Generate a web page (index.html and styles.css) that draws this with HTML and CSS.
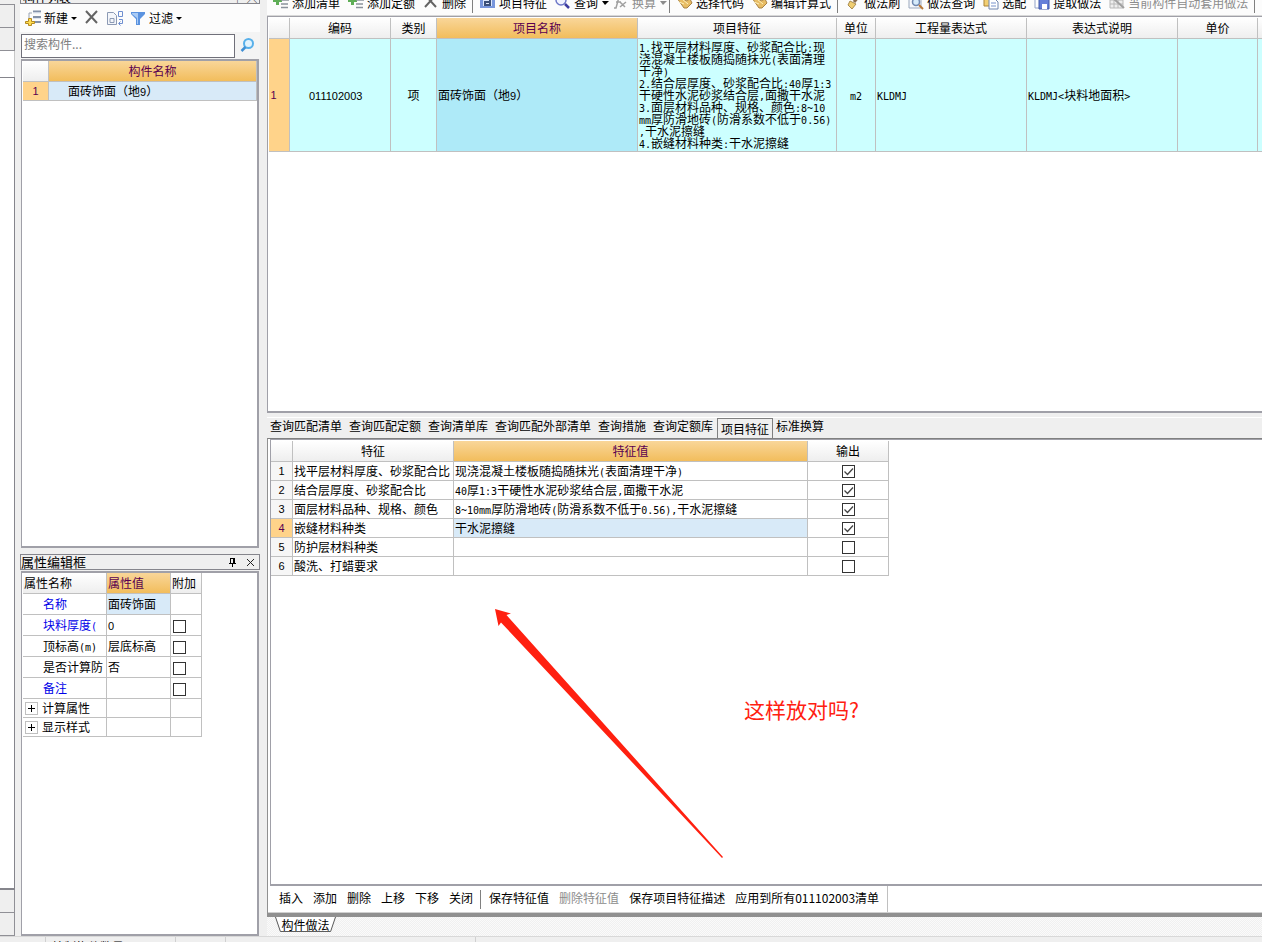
FILE: index.html
```html
<!DOCTYPE html>
<html lang="zh-CN">
<head>
<meta charset="utf-8">
<title>构件做法</title>
<link rel="stylesheet" href="styles.css">
</head>
<body>
<div class="workspace">
  <div class="edge-strip">
    <div class="edge-cap"></div>
    <div class="edge-cell"></div>
    <div class="edge-cell"></div>
    <div class="edge-gap"></div>
    <div class="edge-list"></div>
    <div class="edge-cell"></div>
    <div class="edge-cell"></div>
  </div>

  <aside class="sidebar">
    <div class="dock-title dock-title-clipped"><span>构件列表</span><span class="clipped-marks">┬ &nbsp;╳</span></div>
    <div class="side-tools">
      <button class="tool">
        <svg class="icon" viewBox="0 0 16 16"><path d="M8 1.500h8M8 7h8M8 12h8" stroke="#8492aa" stroke-width="2" fill="none"/><path d="M8 3h8M8 8.500h8" stroke="#dfe5ef" fill="none"/><path d="M4 8V3h3" stroke="#9aa4b4" fill="none"/><path d="M3.500 8.500h3v3h3v2h-3v2h-3v-2h-3v-2h3z" fill="#ffdc50" stroke="#b48a20"/></svg>
        <span>新建</span><i class="caret"></i>
      </button>
      <button class="tool tool-x" aria-label="删除">
        <svg class="icon" viewBox="0 0 16 16"><path d="M2 1l11 12M13 1L2 13" stroke="#646464" stroke-width="2" fill="none"/></svg>
      </button>
      <button class="tool tool-copy" aria-label="复制">
        <svg class="icon" viewBox="0 0 16 16"><path d="M.5 2.500h6l3 3v9h-9z" fill="#f4f6fa" stroke="#8c9ab4"/><path d="M3 8.500h4v4H3z" fill="none" stroke="#8c9ab4"/><path d="M11.500 1.500h4v5h-4zM12 9.500h3.500v4H12M13.500 11.500l-2 2 2 2" fill="none" stroke="#6f8fd0"/></svg>
      </button>
      <button class="tool">
        <svg class="icon" viewBox="0 0 16 16"><path d="M1 2h14v2l-5 5v6H6V9L1 4z" fill="#5b93e0"/><path d="M2 3h6v11H7V8L2 4z" fill="#a9cbf5"/></svg>
        <span>过滤</span><i class="caret"></i>
      </button>
    </div>
    <div class="search-row">
      <input class="search-input" type="text" placeholder="搜索构件..." aria-label="搜索构件">
      <button class="search-button" aria-label="搜索">
        <svg class="icon" viewBox="0 0 16 16"><circle cx="8.500" cy="5.500" r="4.500" fill="#e2f3fd" stroke="#58b0ea" stroke-width="2"/><path d="M5.500 9L1.500 13" stroke="#3f8fd4" stroke-width="2.500"/></svg>
      </button>
    </div>
    <div class="side-box side-list">
      <table class="grid list-grid">
        <colgroup><col class="w26"><col></colgroup>
        <thead><tr><th></th><th class="hot">构件名称</th></tr></thead>
        <tbody><tr><td class="rownum current">1</td><td class="selected indent">面砖饰面（地<span class="num">9</span>）</td></tr></tbody>
      </table>
    </div>
    <div class="dock-title dock-title-props">
      <span>属性编辑框</span>
      <span class="dock-buttons">
        <button aria-label="固定"><svg viewBox="0 0 9 9"><path d="M2 .5h5M2.500 0v5M5.500 0v5M6.500 0v5M1 5.500h7M4.500 5v4" stroke="#000" fill="none"/></svg></button>
        <button aria-label="关闭"><svg viewBox="0 0 9 9"><path d="M1 1l7 7M8 1L1 8" stroke="#222" fill="none"/></svg></button>
      </span>
    </div>
    <div class="side-box side-props">
      <table class="grid prop-grid">
        <colgroup><col class="w84"><col class="w64"><col class="w31"></colgroup>
        <thead><tr><th>属性名称</th><th class="hot">属性值</th><th>附加</th></tr></thead>
        <tbody>
          <tr><td class="prop link">名称</td><td class="selected">面砖饰面</td><td></td></tr>
          <tr><td class="prop link">块料厚度<span class="mono">(</span></td><td><span class="num">0</span></td><td><input type="checkbox" aria-label="块料厚度 附加"></td></tr>
          <tr><td class="prop">顶标高<span class="mono">(m)</span></td><td>层底标高</td><td><input type="checkbox" aria-label="顶标高 附加"></td></tr>
          <tr><td class="prop">是否计算防</td><td>否</td><td><input type="checkbox" aria-label="是否计算防 附加"></td></tr>
          <tr><td class="prop link">备注</td><td></td><td><input type="checkbox" aria-label="备注 附加"></td></tr>
          <tr class="group"><td><div class="group-label"><button class="expander" aria-label="展开计算属性"></button><span>计算属性</span></div></td><td></td><td></td></tr>
          <tr class="group"><td><div class="group-label"><button class="expander" aria-label="展开显示样式"></button><span>显示样式</span></div></td><td></td><td></td></tr>
        </tbody>
      </table>
    </div>
  </aside>

  <main class="main">
    <div class="main-tools">
      <div class="main-tools-row">
        <button class="tool"><svg class="icon" viewBox="0 0 16 16"><path d="M3 1h3v3h3v3H6v3H3V7H0V4h3z" fill="#5fae57"/><path d="M8 5h8M8 9h7M8 12.500h7" stroke="#8b929c" stroke-width="1.500"/></svg><span>添加清单</span></button>
        <button class="tool"><svg class="icon" viewBox="0 0 16 16"><path d="M3 1h3v3h3v3H6v3H3V7H0V4h3z" fill="#5fae57"/><path d="M8 5h8M8 9h7M8 12.500h7" stroke="#8b929c" stroke-width="1.500"/></svg><span>添加定额</span></button>
        <button class="tool"><svg class="icon" viewBox="0 0 16 16"><path d="M2 0l11 12M13 0L2 12" stroke="#646464" stroke-width="2" fill="none"/></svg><span>删除</span></button>
        <i class="divider"></i>
        <button class="tool"><svg class="icon" viewBox="0 0 16 16"><path d="M0 0h15v13H0z" fill="#7896dc"/><path d="M3 2h9v9H3z" fill="#dce6fa"/><path d="M10 3v7H5V7h4" fill="none" stroke="#3c5078" stroke-width="2"/></svg><span>项目特征</span></button>
        <button class="tool menu"><svg class="icon" viewBox="0 0 16 16"><circle cx="6" cy="5" r="5" fill="#f2f4ff" stroke="#6e78c8" stroke-width="1.500"/><path d="M10 9l4 4" stroke="#3c3ca0" stroke-width="2.500"/></svg><span>查询</span><i class="caret"></i></button>
        <button class="tool menu off"><svg class="icon" viewBox="0 0 16 16"><path d="M8 2H6L3 13H1M3 7h5M7 7l5 5M13 7l-6 5" stroke="#a0a0a0" stroke-width="1.500" fill="none"/></svg><span>换算</span><i class="caret"></i></button>
        <i class="divider"></i>
        <button class="tool"><svg class="icon" viewBox="0 0 16 16"><path d="M0 3l4-1 5 4 4-2 2 4-5 5H7z" fill="#e8bd65" stroke="#a98243"/><path d="M2 7l5 2M5 4l6 5" stroke="#fff1bd"/></svg><span>选择代码</span></button>
        <button class="tool"><svg class="icon" viewBox="0 0 16 16"><path d="M0 3l4-1 5 4 4-2 2 4-5 5H7z" fill="#e8bd65" stroke="#a98243"/><path d="M2 7l5 2M5 4l6 5" stroke="#fff1bd"/></svg><span>编辑计算式</span></button>
        <i class="divider"></i>
        <button class="tool"><svg class="icon" viewBox="0 0 16 16"><path d="M14 1L9 7" stroke="#8a6c50" stroke-width="3"/><path d="M5 6l6 3-4 5-4-4z" fill="#f0ce72" stroke="#aa8c50"/></svg><span>做法刷</span></button>
        <button class="tool"><svg class="icon" viewBox="0 0 16 16"><path d="M1 0h12v13H1z" fill="#f6f8fc" stroke="#9ba8bd"/><circle cx="8" cy="7" r="3.500" fill="#d5eafa" stroke="#7088b0" stroke-width="1.500"/><path d="M11 10l4 4" stroke="#b87838" stroke-width="2"/></svg><span>做法查询</span></button>
        <button class="tool"><svg class="icon" viewBox="0 0 16 16"><path d="M1 0h11v11H1z" fill="#f2cf73" stroke="#ad8437"/><path d="M6 4h6l3 3v7H6z" fill="#fff" stroke="#7086b0"/><path d="M8 8h5M8 11h5" stroke="#7893cc"/></svg><span>选配</span></button>
        <button class="tool"><svg class="icon" viewBox="0 0 16 16"><path d="M1 0h8v13H1z" fill="#fff" stroke="#93a3c8"/><path d="M5 3h10v11H5z" fill="#6680d8" stroke="#4058a8"/><path d="M8 9h5v5H8z" fill="#fff"/></svg><span>提取做法</span></button>
        <button class="tool off"><svg class="icon" viewBox="0 0 16 16"><path d="M1 1h13v12H1zM1 5h13M1 9h13M5 1v12M9 1v12" fill="#eee" stroke="#b8b8b8"/><path d="M5 4l10 9" stroke="#a0a0a0" stroke-width="2"/></svg><span>当前构件自动套用做法</span></button>
        <i class="divider"></i>
      </div>
    </div>

    <div class="item-pane">
      <table class="grid item-grid">
        <colgroup><col class="w21"><col class="w101"><col class="w46"><col class="w201"><col class="w199"><col class="w39"><col class="w151"><col class="w151"><col class="w80"><col class="w80"></colgroup>
        <thead><tr><th></th><th>编码</th><th>类别</th><th class="hot">项目名称</th><th>项目特征</th><th>单位</th><th>工程量表达式</th><th>表达式说明</th><th>单价</th><th></th></tr></thead>
        <tbody><tr>
          <td class="rownum current">1</td>
          <td class="code"><span class="num">011102003</span></td>
          <td class="center">项</td>
          <td class="picked">面砖饰面（地<span class="num">9</span>）</td>
          <td class="feature"><span class="mono">1.</span>找平层材料厚度、砂浆配合比<span class="mono">:</span>现<br>浇混凝土楼板随捣随抹光<span class="mono">(</span>表面清理<br>干净<span class="mono">)</span><br><span class="mono">2.</span>结合层厚度、砂浆配合比<span class="mono">:40</span>厚<span class="mono">1:3</span><br>干硬性水泥砂浆结合层<span class="mono">,</span>面撒干水泥<br><span class="mono">3.</span>面层材料品种、规格、颜色<span class="mono">:8~10</span><br><span class="mono">mm</span>厚防滑地砖<span class="mono">(</span>防滑系数不低于<span class="mono">0.56)</span><br><span class="mono">,</span>干水泥擦缝<br><span class="mono">4.</span>嵌缝材料种类<span class="mono">:</span>干水泥擦缝</td>
          <td class="center"><span class="mono">m2</span></td>
          <td><span class="mono">KLDMJ</span></td>
          <td><span class="mono">KLDMJ&lt;</span>块料地面积<span class="mono">&gt;</span></td>
          <td></td><td></td>
        </tr></tbody>
      </table>
    </div>

    <nav class="query-tabs">
      <button>查询匹配清单</button><button>查询匹配定额</button><button>查询清单库</button><button>查询匹配外部清单</button><button>查询措施</button><button>查询定额库</button><button class="active">项目特征</button><button>标准换算</button>
    </nav>

    <div class="detail-frame">
      <div class="detail-pane">
        <table class="grid feature-grid">
          <colgroup><col class="w22"><col class="w161"><col class="w354"><col class="w81"></colgroup>
          <thead><tr><th></th><th>特征</th><th class="hot">特征值</th><th>输出</th></tr></thead>
          <tbody>
            <tr><td class="rownum">1</td><td>找平层材料厚度、砂浆配合比</td><td>现浇混凝土楼板随捣随抹光<span class="mono">(</span>表面清理干净<span class="mono">)</span></td><td class="center"><input type="checkbox" checked aria-label="输出 1"></td></tr>
            <tr><td class="rownum">2</td><td>结合层厚度、砂浆配合比</td><td><span class="mono">40</span>厚<span class="mono">1:3</span>干硬性水泥砂浆结合层<span class="mono">,</span>面撒干水泥</td><td class="center"><input type="checkbox" checked aria-label="输出 2"></td></tr>
            <tr><td class="rownum">3</td><td>面层材料品种、规格、颜色</td><td><span class="mono">8~10mm</span>厚防滑地砖<span class="mono">(</span>防滑系数不低于<span class="mono">0.56),</span>干水泥擦缝</td><td class="center"><input type="checkbox" checked aria-label="输出 3"></td></tr>
            <tr><td class="rownum current">4</td><td>嵌缝材料种类</td><td class="selected">干水泥擦缝</td><td class="center"><input type="checkbox" checked aria-label="输出 4"></td></tr>
            <tr><td class="rownum">5</td><td>防护层材料种类</td><td></td><td class="center"><input type="checkbox" aria-label="输出 5"></td></tr>
            <tr><td class="rownum">6</td><td>酸洗、打蜡要求</td><td></td><td class="center"><input type="checkbox" aria-label="输出 6"></td></tr>
          </tbody>
        </table>
        <svg class="arrow" viewBox="0 0 228 249"><path d="M0 0l16 4.500-4.500 1.500L228 248l-1 1L6 13.500l-2.500 3.500z" fill="#ff2010"/></svg>
        <p class="note">这样放对吗?</p>
      </div>
      <div class="detail-tools">
        <div class="detail-tools-row">
          <button>插入</button><button>添加</button><button>删除</button><button>上移</button><button>下移</button><button>关闭</button>
          <i class="divider"></i>
          <button>保存特征值</button><button class="off">删除特征值</button><button>保存项目特征描述</button><button>应用到所有011102003清单</button>
        </div>
      </div>
    </div>
    <div class="sheet-bar">
      <button class="sheet-tab">
        <svg viewBox="0 0 62 16" preserveAspectRatio="none"><path d="M.5 0l5 15.500h51L61.500 0" fill="#fff" stroke="#505050"/></svg>
        <span>构件做法</span>
      </button>
    </div>
  </main>
</div>
<footer class="status"><span class="s46"></span><span class="s130">绘制构件数量</span><span class="s50"></span><span class="s250"></span></footer>
</body>
</html>
```
FILE: styles.css
```css
* { box-sizing: border-box; }

body {
  margin: 0;
  height: 100vh;
  overflow: hidden;
  display: flex;
  flex-direction: column;
  background: #efefef;
  color: #000;
  font: 12px/16px "Noto Sans CJK SC", sans-serif;
}

button, input {
  margin: 0;
  padding: 0;
  border: 0;
  background: none;
  color: inherit;
  font: inherit;
}

button { white-space: nowrap; }

.workspace { flex: 1; display: flex; min-height: 0; }

/* left edge */
.edge-strip {
  width: 15px;
  flex: none;
  display: flex;
  flex-direction: column;
}
.edge-cap { height: 5px; border-bottom: 1px solid #909096; }
.edge-cell { height: 23px; border-right: 1px solid #909096; border-bottom: 1px solid #909096; background: #efefef; }
.edge-gap { height: 26px; border-right: 1px solid #c8c8c8; background: #fff; }
.edge-list { flex: 1; border: 1px solid #85858c; border-left: 0; border-bottom-width: 2px; background: #fff; }

/* sidebar */
.sidebar {
  width: 240px;
  flex: none;
  margin: 0 7px 0 5px;
  display: flex;
  flex-direction: column;
}
.dock-title {
  flex: none;
  display: flex;
  justify-content: space-between;
  border: 1px solid #85858c;
  overflow: hidden;
}
.dock-title-clipped { height: 4px; border-top: 0; align-items: flex-end; padding: 0 2px; line-height: 10px; }
.clipped-marks { font-size: 10px; }
.dock-title-props { height: 16px; margin: 6px 0 1px; line-height: 13px; font-size: 13px; }
.dock-buttons { display: flex; align-items: center; gap: 9px; padding-right: 4px; }
.dock-buttons button { display: flex; width: 9px; height: 9px; }
.dock-buttons svg { width: 9px; height: 9px; }

.side-tools {
  height: 28px;
  flex: none;
  display: flex;
  align-items: center;
  gap: 7px;
  padding-left: 5px;
  background: #fcfcfc;
}
.tool { display: flex; align-items: center; flex: none; gap: 3px; }
.icon { width: 16px; height: 16px; flex: none; }
.caret { border: 3px solid transparent; border-top-color: currentColor; border-bottom: 0; }

.search-row { height: 27px; flex: none; display: flex; align-items: center; padding: 0 4px 0 1px; background: #f4f4f4; }
.search-input { flex: 1; min-width: 0; height: 24px; border: 1px solid #70707a; background: #fff; padding: 0 2px 5px; }
.search-input::placeholder { color: #808080; opacity: 1; }
.search-button { display: flex; margin-left: 5px; }

.side-box { margin: 0 1px; border: 2px solid #a0a0a8; border-left-width: 1px; background: #fff; overflow: hidden; padding-left: 1px; }
.side-list { flex: 490 1 0; }
.side-props { flex: 364 1 0; }

/* grids */
.grid { table-layout: fixed; border-collapse: separate; border-spacing: 0; line-height: 14px; }
.grid th, .grid td {
  padding: 0 1px;
  border: 0 solid #c0c0c0;
  border-width: 0 1px 1px 0;
  overflow: hidden;
  white-space: nowrap;
  text-align: left;
  font-weight: normal;
}
.grid th { height: 21px; text-align: center; background: linear-gradient(#fff, #eee); }
.grid .hot { background: linear-gradient(#f9d699, #f2bd5c); color: #5a0050; }
.grid .rownum { padding: 0; text-align: center; background: #f6f6f6; font: 11px/14px "Liberation Sans", sans-serif; }
.grid .current { background: #ffd38a; color: #5a0050; }
.grid .selected { background: #d8eaf8; }
.grid .center { text-align: center; }

.num { font: 11px/0 "Liberation Sans", sans-serif; }
.mono { font: 10px/0 "DejaVu Sans Mono", monospace; }

.list-grid { width: 100%; }
.list-grid td { height: 19px; }
.list-grid .indent { padding-left: 19px; }

.prop-grid { width: 179px; }
.prop-grid th { text-align: left; }
.prop-grid td { height: 21px; }
.prop-grid .group td { height: 19px; }
.prop-grid .prop { padding: 0 0 0 20px; }
.prop-grid .link { color: #0000e8; }
.group-label { display: flex; align-items: center; gap: 4px; padding-left: 1px; }
.expander {
  width: 13px;
  height: 13px;
  border: 1px solid #c0c0c0;
  background:
    linear-gradient(#000, #000) center / 7px 1px no-repeat,
    linear-gradient(#000, #000) center / 1px 7px no-repeat;
}

input[type="checkbox"] {
  appearance: none;
  display: inline-block;
  width: 13px;
  height: 13px;
  margin-left: 1px;
  border: 1px solid #333;
  background: #fff;
  vertical-align: middle;
}
input[type="checkbox"]:checked {
  background: #fff url("data:image/svg+xml,%3Csvg xmlns='http://www.w3.org/2000/svg' viewBox='0 0 11 11'%3E%3Cpath d='M1.500 5.500l3 3 5.500-6' fill='none' stroke='%23444' stroke-width='1.300'/%3E%3C/svg%3E") center / 11px 11px no-repeat;
}

/* main column */
.main { flex: 1; min-width: 0; display: flex; flex-direction: column; }
.main-tools { height: 16px; flex: none; overflow: hidden; background: #fcfcfc; border-bottom: 1px solid #d8d8d8; }
.main-tools-row { display: flex; align-items: center; height: 24px; margin-top: -9px; padding-left: 2px; }
.main-tools .tool { padding: 0 4px; }
.main-tools .menu { padding-right: 0; }
.main-tools .caret { margin-left: 1px; border-width: 4px 4px 0 3px; }
.off { color: #8c8c8c; }
.divider { flex: none; width: 1px; height: 19px; margin: 0 3px 0 2px; background: #808080; }

.item-pane { flex: 395 1 0; min-height: 0; overflow: hidden; background: #fff; border: 1px solid #a0a0a8; border-right: 0; border-bottom-width: 2px; padding: 1px 0 0 1px; }
.item-grid { width: 1069px; }
.item-grid td { height: 113px; background: #ccffff; }
.item-grid .rownum { padding-right: 11px; }
.item-grid .picked { background: #aeeaf8; }
.item-grid .code { padding-left: 19px; }
.item-grid .feature { line-height: 12px; }

.query-tabs { height: 21px; flex: none; display: flex; margin-top: 4px; overflow: hidden; border-top: 1px solid #fff; }
.query-tabs button { flex: none; padding: 0 4px 3px 3px; }
.query-tabs .active { border: 1px solid #808080; border-bottom: 0; padding: 1px 3px 0 3px; }

.detail-frame { flex: 477 1 0; min-height: 0; display: flex; flex-direction: column; border-left: 1px solid #909090; border-top: 1px solid #808080; background: #fff; }
.detail-pane { position: relative; flex: 1; min-height: 0; overflow: hidden; margin-left: 2px; border: 1px solid #a0a0a8; border-right: 0; border-bottom-width: 2px; padding: 1px 0 0 0; }
.feature-grid { width: 618px; }
.feature-grid td { height: 19px; }
.arrow { position: absolute; left: 224px; top: 169px; width: 228px; height: 249px; }
.note { position: absolute; left: 473px; top: 254px; margin: 0; color: #ff2010; font-size: 21px; line-height: 30px; }

.detail-tools { flex: none; display: flex; height: 27px; border-bottom: 1px solid #d0d0d0; }
.detail-tools-row { display: flex; align-items: center; padding: 0 3px 0 6px; border-right: 1px solid #c0c0c0; }
.detail-tools button { padding: 0 5px 2px; }
.detail-tools .divider { margin: 0 3px 0 2px; }

.sheet-bar {
  flex: none;
  height: 23px;
  border-top: 4px solid #909090;
  padding-left: 8px;
  background: repeating-conic-gradient(#f0f0f0 0 25%, #fafafa 0 50%) 0 0 / 2px 2px;
}
.sheet-tab { position: relative; display: block; width: 61px; height: 15px; line-height: 13px; }
.sheet-tab svg { position: absolute; inset: 0; width: 100%; height: 100%; }
.sheet-tab span { position: relative; }

.status { height: 6px; flex: none; display: flex; overflow: hidden; border-top: 1px solid #d8d8d8; line-height: 20px; }
.status span { flex: none; height: 16px; border-right: 1px solid #d0d0d0; padding-left: 6px; }

.w21 { width: 21px; }
.w22 { width: 22px; }
.w26 { width: 26px; }
.w31 { width: 31px; }
.w39 { width: 39px; }
.w46 { width: 46px; }
.w64 { width: 64px; }
.w80 { width: 80px; }
.w81 { width: 81px; }
.w84 { width: 84px; }
.w101 { width: 101px; }
.w151 { width: 151px; }
.w161 { width: 161px; }
.w199 { width: 199px; }
.w201 { width: 201px; }
.w354 { width: 354px; }
.s46 { width: 46px; }
.s50 { width: 50px; }
.s130 { width: 130px; }
.s250 { width: 250px; }
```
